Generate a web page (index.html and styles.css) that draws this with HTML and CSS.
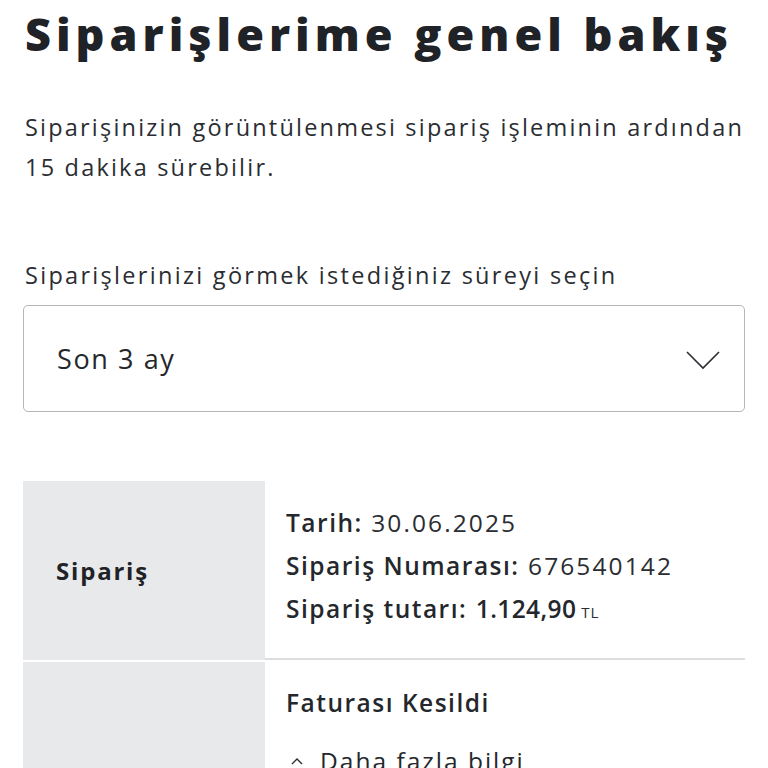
FILE: index.html
```html
<!DOCTYPE html>
<html lang="tr">
<head>
<meta charset="utf-8">
<link rel="stylesheet" href="styles.css">
</head>
<body>
<main class="page">
  <h1 class="title">Siparişlerime genel bakış</h1>
  <p class="intro">Siparişinizin görüntülenmesi sipariş işleminin ardından 15 dakika sürebilir.</p>
  <label class="label">Siparişlerinizi görmek istediğiniz süreyi seçin</label>
  <div class="select">
    <span class="select-value">Son 3 ay</span>
    <svg class="chevron" width="34" height="20" viewBox="0 0 34 20"><path d="M1 2 L17 18 L33 2" fill="none" stroke="#2a2d31" stroke-width="1.6"/></svg>
  </div>
  <div class="orders">
    <div class="row">
      <div class="cell-head">Sipariş</div>
      <div class="cell-body">
        <div class="line"><span class="key">Tarih:</span> 30.06.2025</div>
        <div class="line"><span class="key">Sipariş Numarası:</span> 676540142</div>
        <div class="line"><span class="key">Sipariş tutarı:</span> <span class="amount">1.124,90</span><span class="cur">TL</span></div>
      </div>
    </div>
    <div class="row row-second">
      <div class="cell-head"></div>
      <div class="cell-body">
        <div class="status">Faturası Kesildi</div>
        <div class="more"><svg class="up" width="14" height="10" viewBox="0 0 14 10"><path d="M2 8 L7 3 L12 8" fill="none" stroke="#2a2d31" stroke-width="1.4"/></svg><span>Daha fazla bilgi</span></div>
      </div>
    </div>
  </div>
</main>
</body>
</html>
```
FILE: styles.css
```css
* { box-sizing: border-box; }
html, body { margin: 0; padding: 0; background: #fff; }
body {
  font-family: "Open Sans", "Liberation Sans", sans-serif;
  color: #24272b;
  overflow: hidden;
}
.page { padding: 0 23px; }
.title {
  margin: 0;
  padding: 4px 0 0 2px;
  font-family: "Open Sans", sans-serif;
  font-weight: 800;
  font-size: 45px;
  line-height: 60px;
  letter-spacing: 5px;
  color: #1f2226;
  white-space: nowrap;
}
.intro {
  margin: 43px 0 0 2px;
  font-size: 23.5px;
  line-height: 40px;
  letter-spacing: 2.2px;
  color: #2a2d31;
}
.label {
  display: block;
  margin: 72px 0 0 2px;
  font-size: 23.5px;
  line-height: 32px;
  letter-spacing: 2.3px;
  color: #2a2d31;
  white-space: nowrap;
}
.select {
  margin-top: 14px;
  height: 107px;
  border: 1.5px solid #b4b6b8;
  border-radius: 5px;
  display: flex;
  align-items: center;
  justify-content: space-between;
  padding: 0 24px 0 33px;
}
.select-value { font-size: 27px; letter-spacing: 1.6px; color: #24272b; }
.chevron { margin-top: 2px; }
.orders { margin-top: 69px; }
.row { display: flex; }
.cell-head {
  width: 242px;
  flex: none;
  background: #e8e9ea;
  display: flex;
  align-items: center;
  padding-left: 33px;
  font-weight: 700;
  font-size: 24px;
  letter-spacing: 1.8px;
  color: #1f2226;
}
.cell-body {
  flex: 1;
  padding: 20px 0 24px 21px;
  border-bottom: 2px solid #dcdddf;
}
.line {
  font-size: 24.5px;
  line-height: 43px;
  letter-spacing: 2.1px;
  color: #2a2d31;
  white-space: nowrap;
}
.key { font-weight: 600; letter-spacing: 1.5px; color: #24272b; }
.amount { font-weight: 600; letter-spacing: 0.4px; color: #24272b; }
.cur { font-size: 15px; margin-left: 5px; letter-spacing: 1px; }
.row-second .cell-head { border-top: 2px solid #fff; }
.row-second .cell-body { border-bottom: none; padding-top: 23px; }
.status { font-size: 24.5px; line-height: 40px; font-weight: 600; letter-spacing: 1.5px; color: #24272b; }
.more {
  margin-top: 22px;
  display: flex;
  align-items: center;
  gap: 16px;
  font-size: 24.5px;
  line-height: 32px;
  letter-spacing: 2px;
}
.up { margin-left: 4px; }
```
